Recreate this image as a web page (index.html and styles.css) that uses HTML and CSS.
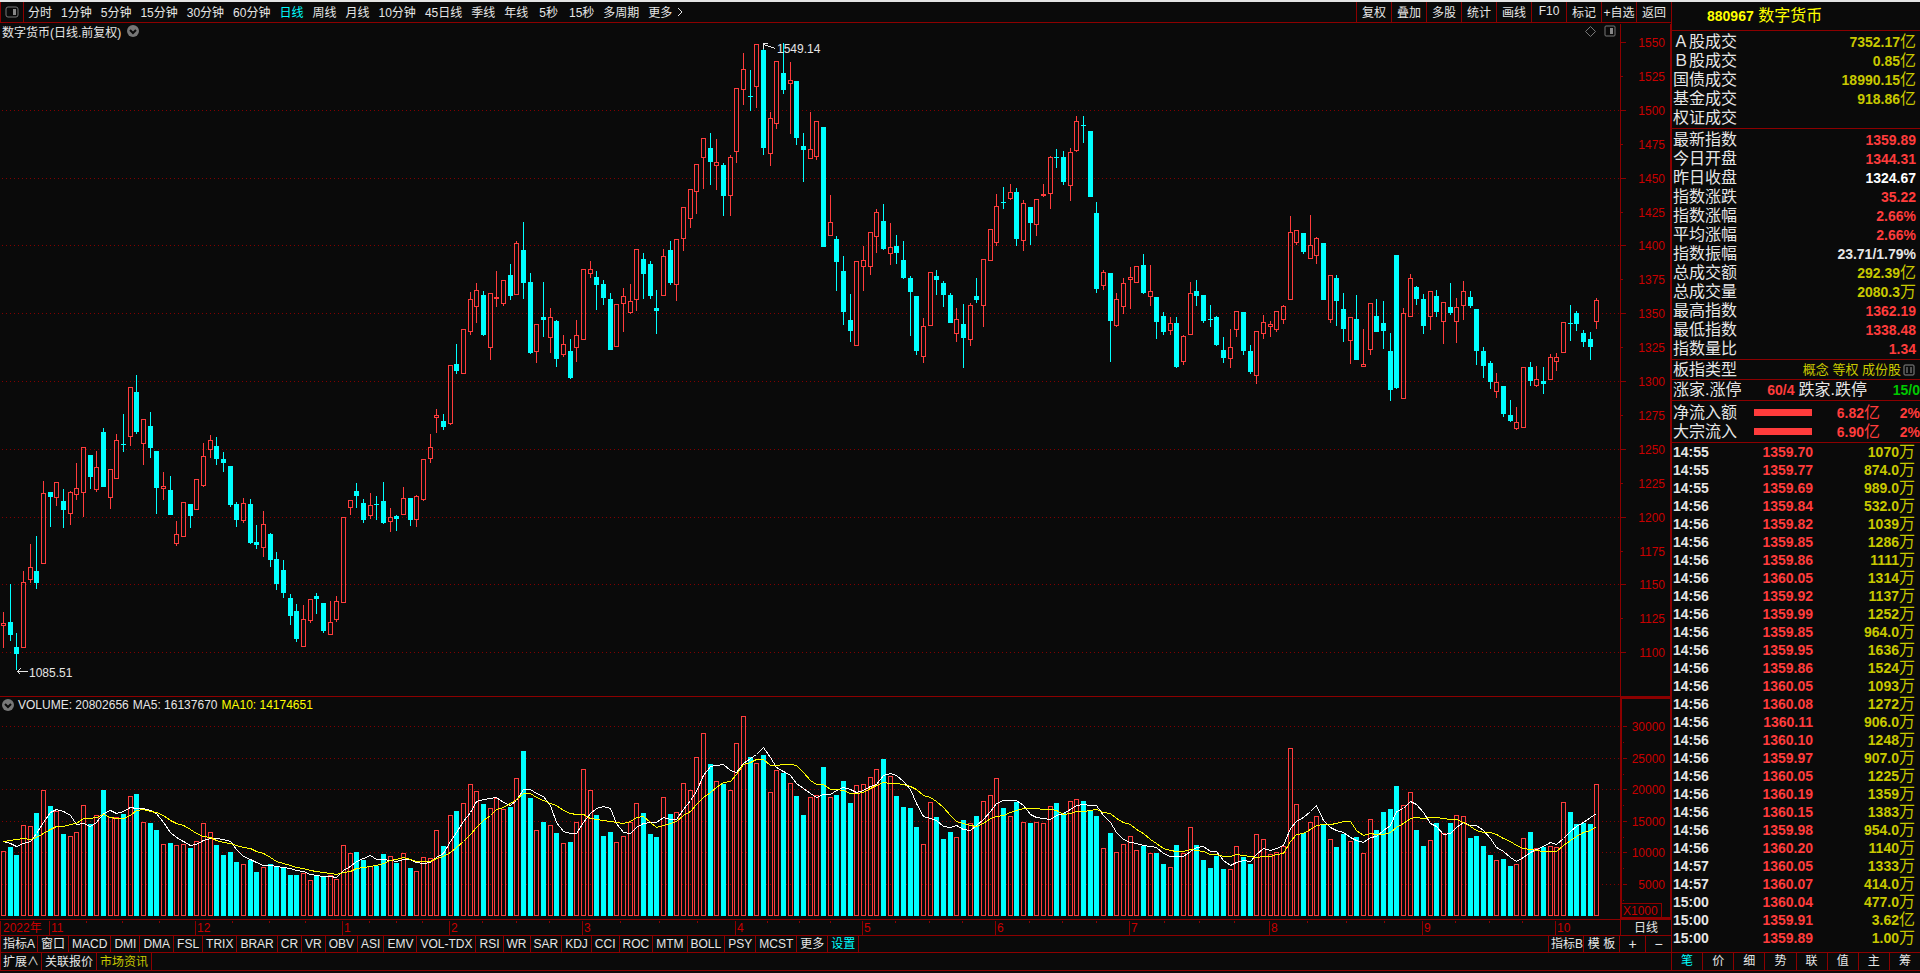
FILE: index.html
```
<!DOCTYPE html>
<html lang="zh-CN">
<head>
  <meta charset="utf-8">
  <title>880967 数字货币</title>
  <meta name="viewport" content="width=device-width, initial-scale=1.0">
  <link rel="stylesheet" href="styles.css">
</head>
<body>
  <div class="app">
    <main class="main">
      <nav class="topbar">
        <button class="panel-btn" aria-label="侧栏">
          <svg width="14" height="12" viewBox="0 0 14 12"><rect x="1" y="1" width="12" height="10" rx="2" fill="none" stroke="#777"/><rect x="8" y="3" width="3" height="6" fill="#888"/></svg>
        </button>
        <div class="periods">
          <button>分时</button><button>1分钟</button><button>5分钟</button><button>15分钟</button><button>30分钟</button><button>60分钟</button><button class="active">日线</button><button>周线</button><button>月线</button><button>10分钟</button><button>45日线</button><button>季线</button><button>年线</button><button class="sec">5秒</button><button class="sec">15秒</button><button>多周期</button><button>更多<svg class="more" width="6" height="10" viewBox="0 0 6 10"><path d="M1 1L5 5L1 9" fill="none" stroke="currentColor"/></svg></button>
        </div>
        <div class="tools">
          <button>复权</button><button>叠加</button><button>多股</button><button>统计</button><button>画线</button><button>F10</button><button>标记</button><button>+自选</button><button>返回</button>
        </div>
      </nav>

      <!-- K line -->
      <section class="price">
        <div class="plot">
          <svg id="priceChart" class="chart"></svg>
          <div class="plot-head">
            <span>数字货币(日线.前复权)</span>
            <svg width="12" height="12" viewBox="0 0 12 12"><circle cx="6" cy="6" r="6" fill="#777"/><path d="M3 5L6 8L9 5" fill="none" stroke="#0a0a0a" stroke-width="2"/></svg>
            <span class="plot-icons">
              <svg width="11" height="11" viewBox="0 0 11 11"><path d="M5.500 .5L10.500 5.500L5.500 10.500L.5 5.500Z" fill="none" stroke="#777"/></svg>
              <svg width="12" height="12" viewBox="0 0 12 12"><rect x="1" y="1" width="10" height="10" rx="1" fill="none" stroke="#777"/><rect x="6" y="3" width="3" height="6" fill="#888"/></svg>
            </span>
          </div>
        </div>
        <svg id="priceAxis" class="axis"></svg>
      </section>

      <!-- volume -->
      <section class="volume">
        <div class="plot">
          <svg id="volChart" class="chart"></svg>
          <div class="vol-head">
            <svg width="12" height="12" viewBox="0 0 12 12"><circle cx="6" cy="6" r="6" fill="#777"/><path d="M3 5L6 8L9 5" fill="none" stroke="#0a0a0a" stroke-width="2"/></svg>
            <span>VOLUME: 20802656</span>
            <span>MA5: 16137670</span>
            <span class="ma10">MA10: 14174651</span>
          </div>
        </div>
        <div class="vol-axis">
          <svg id="volAxis" class="axis-fill"></svg>
          <span class="unit">X1000</span>
        </div>
      </section>

      <div class="dates">
        <svg id="dateAxis" class="date-axis"></svg>
        <button class="cycle">日线</button>
      </div>

      <div class="indicators">
        <button>指标A</button><button>窗口</button><button>MACD</button><button>DMI</button><button>DMA</button><button>FSL</button><button>TRIX</button><button>BRAR</button><button>CR</button><button>VR</button><button>OBV</button><button>ASI</button><button>EMV</button><button>VOL-TDX</button><button>RSI</button><button>WR</button><button>SAR</button><button>KDJ</button><button>CCI</button><button>ROC</button><button>MTM</button><button>BOLL</button><button>PSY</button><button>MCST</button><button>更多</button><button class="active">设置</button>
        <div class="templates"><button>指标B</button><button>模 板</button></div>
        <div class="zoom"><button>+</button><button>−</button></div>
      </div>

      <div class="links">
        <button>扩展∧</button><button>关联报价</button><button class="info">市场资讯</button>
      </div>
    </main>

    <aside class="side">
      <h1 class="name"><b>880967</b> 数字货币</h1>

      <table class="quote">
        <tr><th>Ａ股成交</th><td class="y"><b>7352.17</b>亿</td></tr>
        <tr><th>Ｂ股成交</th><td class="y"><b>0.85</b>亿</td></tr>
        <tr><th>国债成交</th><td class="y"><b>18990.15</b>亿</td></tr>
        <tr><th>基金成交</th><td class="y"><b>918.86</b>亿</td></tr>
        <tr><th>权证成交</th><td></td></tr>
      </table>

      <table class="quote">
        <tr><th>最新指数</th><td class="r"><b>1359.89</b></td></tr>
        <tr><th>今日开盘</th><td class="r"><b>1344.31</b></td></tr>
        <tr><th>昨日收盘</th><td class="w"><b>1324.67</b></td></tr>
        <tr><th>指数涨跌</th><td class="r"><b>35.22</b></td></tr>
        <tr><th>指数涨幅</th><td class="r"><b>2.66%</b></td></tr>
        <tr><th>平均涨幅</th><td class="r"><b>2.66%</b></td></tr>
        <tr><th>指数振幅</th><td><b>23.71/1.79%</b></td></tr>
        <tr><th>总成交额</th><td class="y"><b>292.39</b>亿</td></tr>
        <tr><th>总成交量</th><td class="y"><b>2080.3</b>万</td></tr>
        <tr><th>最高指数</th><td class="r"><b>1362.19</b></td></tr>
        <tr><th>最低指数</th><td class="r"><b>1338.48</b></td></tr>
        <tr><th>指数量比</th><td class="r"><b>1.34</b></td></tr>
      </table>

      <div class="line type">
        <span>板指类型</span>
        <span class="tags">概念 等权 成份股
          <svg width="12" height="12" viewBox="0 0 12 12"><rect x="1" y="1" width="10" height="10" rx="1" fill="none" stroke="#888"/><path d="M3 4H5M7 4H9M3 6H5M7 6H9M3 8H5M7 8H9" stroke="#999"/></svg>
        </span>
      </div>

      <div class="line updown">
        <span>涨家.涨停</span><b class="r">60/4</b><span>跌家.跌停</span><b class="g">15/0</b>
      </div>

      <table class="flow">
        <tr><th>净流入额</th><td><i class="bar"></i></td><td class="r"><b>6.82</b>亿</td><td class="r"><b>2%</b></td></tr>
        <tr><th>大宗流入</th><td><i class="bar"></i></td><td class="r"><b>6.90</b>亿</td><td class="r"><b>2%</b></td></tr>
      </table>

      <table class="ticks"><tbody id="ticks"></tbody></table>

      <nav class="tabs">
        <button class="active">笔</button><button>价</button><button>细</button><button>势</button><button>联</button><button>值</button><button>主</button><button>筹</button>
      </nav>
    </aside>
  </div>
  <script src="chart.js"></script>
</body>
</html>
```
FILE: styles.css
```
* {
  box-sizing: border-box;
}
body {
  margin: 0;
  background: #0a0a0a;
  color: #e6e6e6;
  font-family: "Liberation Sans", "Noto Sans CJK SC", sans-serif;
  font-size: 12px;
}
button {
  margin: 0;
  padding: 0;
  border: 0;
  background: none;
  color: inherit;
  font: inherit;
  white-space: nowrap;
  cursor: pointer;
}
table {
  border-collapse: separate;
  border-spacing: 0;
}
.app {
  display: flex;
  height: 100vh;
  border-top: 2px solid #e4e4e4;
  padding-bottom: 2px;
  overflow: hidden;
}
.main {
  flex: 1;
  min-width: 0;
  display: flex;
  flex-direction: column;
}
.active {
  color: #00ffff;
}

/* top menu */
.topbar {
  display: flex;
  height: 21px;
  border-bottom: 1px solid #8c0000;
  border-left: 1px solid #8c0000;
}
.panel-btn {
  display: flex;
  align-items: center;
  justify-content: center;
  width: 23px;
  border-right: 1px solid #8c0000;
}
.periods {
  display: flex;
  gap: 9px;
  padding-left: 4px;
}
.periods button,
.tools button {
  padding-bottom: 2px;
}
.periods .sec {
  padding-left: 2px;
}
.more {
  margin-left: 5px;
}
.tools {
  display: flex;
  margin-left: auto;
}
.tools button {
  width: 35px;
  border-left: 1px solid #8c0000;
}

/* charts */
.price,
.volume {
  display: flex;
  border-bottom: 1px solid #8c0000;
}
.price {
  flex: 1;
  min-height: 0;
}
.volume {
  height: 223px;
}
.plot {
  position: relative;
  flex: 1;
  min-width: 0;
}
.chart {
  display: block;
  width: 100%;
  height: 100%;
}
.plot-head,
.vol-head {
  position: absolute;
  top: 0;
  left: 2px;
  right: 4px;
  display: flex;
  align-items: center;
  height: 16px;
}
.plot-head {
  gap: 6px;
}
.plot-icons {
  display: flex;
  align-items: center;
  gap: 8px;
  margin-left: auto;
}
.vol-head {
  gap: 4px;
}
.vol-head .ma10 {
  color: #ffff00;
}
.axis {
  width: 51px;
  height: 100%;
}
.vol-axis {
  position: relative;
  width: 51px;
  border: 2px solid #8c0000;
  border-right: 1px solid #8c0000;
}
.axis-fill {
  display: block;
  width: 100%;
  height: 100%;
}
.unit {
  position: absolute;
  left: 0;
  bottom: 0;
  height: 14px;
  padding: 0 3px 0 1px;
  border: 1px solid #8c0000;
  border-width: 1px 1px 0 0;
  color: #c80000;
  line-height: 14px;
}
.grid {
  stroke: #820000;
  stroke-dasharray: 1 3;
}
.rule {
  stroke: #8c0000;
}
.label {
  fill: #c80000;
}
.mark {
  fill: #e6e6e6;
}
.arrow {
  stroke: #e6e6e6;
  fill: none;
}
.up {
  fill: none;
  stroke: #ff3c3c;
}
.down {
  fill: #00ffff;
}
.ma5-line {
  fill: none;
  stroke: #ffffff;
}
.ma10-line {
  fill: none;
  stroke: #ffff00;
}

/* rows under the charts */
.dates,
.indicators,
.links {
  display: flex;
  border-bottom: 1px solid #8c0000;
}
.dates {
  height: 16px;
}
.indicators {
  height: 17px;
}
.links {
  height: 18px;
}
.date-axis {
  flex: 1;
  min-width: 0;
  height: 15px;
}
.cycle {
  width: 51px;
  border-left: 1px solid #8c0000;
  line-height: 14px;
}
.indicators button,
.links button {
  padding: 0 3px;
  border-right: 1px solid #8c0000;
  line-height: 16px;
}
.indicators button:first-child,
.links button:first-child {
  padding: 0 2px;
  border-left: 1px solid #8c0000;
}
.templates {
  display: flex;
  margin-left: auto;
}
.templates button {
  width: 36px;
}
.zoom {
  display: flex;
  width: 51px;
}
.indicators .zoom button {
  flex: 1;
  padding: 0;
  border-left: 0;
  font-size: 14px;
}
.zoom button:last-child {
  border-right: 0;
}
.links .info {
  color: #c8c800;
}

/* quote panel */
.side {
  display: flex;
  flex-direction: column;
  width: 249px;
  border-left: 1px solid #8c0000;
  font-size: 16px;
}
.side b {
  font-size: 14px;
}
.side th {
  padding: 0;
  font-weight: normal;
  text-align: left;
}
.side td {
  padding: 0;
  text-align: right;
}
.y {
  color: #c8c800;
}
.r {
  color: #ff3c3c;
}
.g {
  color: #00c800;
}
.w {
  color: #ffffff;
}
.name {
  margin: 0;
  height: 29px;
  border-bottom: 1px solid #8c0000;
  color: #ffff00;
  font-size: 16px;
  font-weight: normal;
  line-height: 28px;
  padding-left: 35px;
}
.quote,
.flow {
  width: 100%;
  padding: 1px 0;
  line-height: 17px;
  border-bottom: 1px solid #8c0000;
}
.quote tr,
.flow tr {
  height: 19px;
}
.side .quote td {
  padding-right: 4px;
}
.quote th,
.side .line,
.flow th,
.ticks td:first-child {
  padding-left: 1px;
}
.line {
  display: flex;
  align-items: center;
  justify-content: space-between;
  border-bottom: 1px solid #8c0000;
}
.type {
  height: 20px;
  line-height: 19px;
}
.tags {
  display: flex;
  align-items: center;
  gap: 2px;
  padding-right: 5px;
  color: #c8c800;
  font-size: 13px;
}
.updown {
  height: 21px;
  line-height: 20px;
}
.updown .r {
  margin-left: auto;
  margin-right: 4px;
}
.updown .g {
  margin-left: auto;
}
.flow {
  padding-top: 2px;
  table-layout: fixed;
}
.flow th {
  width: 82px;
}
.flow td:nth-child(2) {
  width: 58px;
}
.flow td:nth-child(3) {
  width: 68px;
}
.bar {
  display: block;
  height: 7px;
  background: #ff3c3c;
}
.ticks {
  width: 100%;
  line-height: 17px;
}
.ticks tr {
  height: 18px;
}
.side .ticks td:first-child {
  width: 44px;
  text-align: left;
}
.side .ticks td:nth-child(2) {
  width: 97px;
}
.side .ticks td:last-child {
  padding-right: 5px;
}
.tabs {
  display: flex;
  height: 19px;
  margin-top: auto;
  border-top: 1px solid #8c0000;
  border-bottom: 1px solid #8c0000;
  font-size: 12px;
}
.tabs button {
  flex: 1;
  border-right: 1px solid #8c0000;
  line-height: 17px;
}
.tabs button:last-child {
  border-right: 0;
}
```
FILE: chart.js
```
// one candle: direction, high, body top, body bottom, low, volume height
const bars = `
R 611 623 626 648 70|C 584 622 635 641 74|C 633 647 654 670 65|R 570 582 648 648 97|R 543 567 580 583 96|C 536 571 583 589 110
R 480 493 564 564 135|C 492 492 497 527 118|R 481 482 498 506 113|C 489 501 510 528 88|R 490 492 514 525 86|R 462 488 495 500 90
R 447 447 493 517 119|C 455 455 477 489 99|R 450 467 490 492 108|C 428 432 487 487 135|R 469 469 498 509 106|R 433 440 479 479 106
C 414 444 445 452 109|R 387 387 437 446 129|C 375 392 432 434 131|R 419 419 444 465 101|C 412 426 448 458 100|C 451 451 488 514 92
R 471 486 489 500 77|C 476 490 515 515 78|R 520 534 544 546 76|R 502 502 537 537 77|C 504 504 516 528 73|R 479 479 510 510 80
R 442 456 486 487 100|R 434 440 450 458 90|C 437 446 459 465 76|C 452 459 463 472 65|C 466 466 505 507 69|C 502 504 520 527 58
R 497 503 521 523 56|C 499 504 543 544 60|C 525 542 545 549 47|R 510 524 548 557 53|C 533 534 560 567 56|C 552 559 584 590 53
C 560 570 593 598 52|C 594 598 616 625 44|C 604 611 639 642 44|R 604 619 647 647 46|R 598 599 621 623 39|C 593 596 599 614 44
C 603 603 631 633 42|R 600 622 635 635 44|R 595 601 620 622 40|R 516 517 603 603 76|R 500 500 508 515 68|C 483 491 496 508 69
C 499 503 520 523 60|R 492 505 516 519 54|C 496 504 505 520 54|C 482 501 523 524 66|R 507 517 522 532 64|C 515 516 519 531 57
R 486 498 515 515 67|C 498 498 520 526 51|R 494 496 520 527 48|R 459 459 500 501 63|R 433 447 459 463 62|R 408 415 418 433 92
C 414 421 427 430 75|R 365 365 424 425 108|C 344 364 371 374 113|R 329 329 374 374 121|R 291 299 332 335 141|R 282 290 307 323 134
C 291 295 335 336 120|R 293 293 348 360 116|R 270 297 299 307 126|R 279 280 304 306 115|C 264 275 296 300 117|R 240 243 295 295 148
C 222 250 283 299 177|C 273 282 353 354 126|R 324 324 352 363 92|C 282 317 320 337 101|R 307 317 338 353 97|C 320 321 359 367 89
R 334 344 355 357 78|C 339 351 378 379 79|R 319 335 348 362 101|R 269 269 340 340 157|R 260 269 274 278 135|C 271 277 285 310 108
C 280 284 298 305 86|C 293 299 350 350 90|R 304 304 347 347 79|R 287 296 304 332 86|R 283 301 313 314 101|R 249 249 300 311 121
C 253 259 274 299 110|C 261 264 296 299 88|C 290 308 311 334 85|R 248 256 296 296 127|C 241 250 283 285 109|R 239 239 285 301 111
R 207 207 239 251 142|R 189 189 219 228 135|R 163 164 192 214 170|R 137 138 158 189 196|C 133 148 162 185 163|R 138 162 166 190 145
C 163 165 196 216 141|R 154 157 196 216 135|R 88 88 152 163 185|R 52 69 90 105 214|C 70 96 97 111 170|R 44 44 87 108 164
C 43 50 148 155 173|R 111 118 154 166 133|R 61 61 124 129 156|C 43 73 90 94 153|R 61 80 84 134 142|C 81 81 138 145 129
C 133 146 150 182 108|R 111 149 159 159 127|R 121 121 157 160 130|C 127 127 247 247 160|R 194 222 236 236 127|C 236 239 262 291 130
C 256 271 312 325 145|C 294 320 331 342 121|R 261 261 346 346 140|R 245 260 267 291 141|R 232 232 267 275 149|R 208 212 237 253 157
C 204 221 249 250 168|R 222 247 254 265 150|C 235 246 253 264 129|C 241 260 278 279 117|C 276 278 292 336 116|C 296 296 351 355 95
R 317 326 357 363 77|R 271 272 326 326 122|C 270 276 280 295 106|C 281 283 295 307 83|C 293 295 323 323 90|R 307 319 334 342 85
C 304 324 338 368 103|R 302 305 340 346 100|C 278 296 300 303 107|R 259 259 306 327 123|R 228 229 261 261 130|R 193 206 243 246 148
C 187 202 203 209 116|R 183 192 199 200 107|C 188 192 239 246 122|R 199 203 241 251 101|C 207 207 223 245 100|R 199 199 225 236 101
R 183 194 196 197 100|R 155 157 194 209 118|C 149 157 158 168 121|C 151 157 182 185 110|R 147 152 186 201 123|R 115 121 151 152 125
C 116 125 126 143 123|C 131 131 197 197 114|C 202 213 289 293 107|R 269 272 286 290 73|C 273 273 321 362 89|R 292 299 326 327 69
R 277 283 307 314 77|R 266 277 280 309 86|R 266 266 283 283 71|C 254 265 293 294 75|R 264 291 297 306 67|C 297 297 322 339 68
C 312 316 332 335 56|R 316 323 331 335 53|C 317 323 367 368 76|R 334 336 362 365 67|R 281 293 335 335 95|C 280 291 296 306 76
C 295 295 321 323 60|C 305 319 320 327 51|C 316 317 345 346 64|C 337 350 358 363 50|R 328 347 359 368 50|R 310 311 330 337 75
C 312 312 351 355 63|C 345 351 372 374 56|R 330 331 376 384 88|R 314 322 334 339 83|R 320 324 327 337 66|R 310 311 330 332 69
R 304 306 320 324 75|R 215 232 300 300 180|R 229 230 243 245 120|C 233 233 252 254 89|R 214 245 259 259 101|R 236 238 256 264 107
C 243 243 300 300 98|R 274 275 320 323 82|C 275 278 301 326 74|C 293 309 329 342 88|R 317 317 341 364 80|C 295 319 360 360 85
R 328 364 367 367 67|R 303 303 350 355 104|C 299 316 332 332 92|C 301 323 331 349 111|C 333 351 390 401 115|C 255 255 388 389 139
R 307 313 399 399 119|R 273 278 317 317 133|C 286 287 299 305 92|C 294 299 326 334 75|R 291 291 317 330 81|C 290 296 312 317 100
R 301 302 322 344 89|C 283 307 313 315 100|R 297 307 322 343 108|R 280 291 306 320 107|C 291 297 306 308 84|C 309 309 351 365 86
C 347 351 366 378 75|C 361 363 382 389 65|R 372 382 392 398 60|C 386 386 414 417 61|C 400 415 421 422 54|R 406 422 429 430 56
R 367 367 428 428 84|C 362 367 381 386 90|R 365 379 386 387 73|C 367 381 384 394 74|R 353 357 380 380 75|R 352 357 362 371 74
R 321 322 353 353 122|C 305 323 324 341 111|C 311 313 324 331 99|C 330 333 342 347 100|C 332 339 347 360 99|R 297 300 322 329 141
`.trim().split(/[|\n]/).map(s => {
  const [dir, ...n] = s.trim().split(' ');
  const [high, top, bottom, low, vol] = n.map(Number);
  return { dir, high, top, bottom, low, vol };
});

// volumes of the nine days before the first bar, needed for the averages
const before = [64, 55, 87, 106, 90, 84, 80, 82, 84];

const PRICE_TOP = 23;
const VOL_BASE = 219;
const VOL_SCALE = 14 / 15;
const barX = i => 3 + Math.round(i * 20 / 3);
const line = (x1, y1, x2, y2, cls) => `<line class="${cls}" x1="${x1}" y1="${y1}" x2="${x2}" y2="${y2}"/>`;
const text = (x, y, s, cls, anchor) => `<text class="${cls}" x="${x}" y="${y}" text-anchor="${anchor || 'start'}">${s}</text>`;
// half pixel shift keeps one pixel strokes sharp
const sharp = s => `<g transform="translate(.5 .5)" shape-rendering="crispEdges">${s}</g>`;

function drawPrice() {
  let grid = '', candles = '', ticks = '', labels = '';
  for (let p = 1550; p >= 1100; p -= 25) {
    const y = Math.round(42 + (1550 - p) * 1.356) - PRICE_TOP;
    const major = p % 50 === 0;
    if (major && p < 1550) grid += line(1, y, '100%', y, 'grid');
    ticks += line(0, y, major ? 5 : 2, y, 'rule');
    labels += text(45, y + 5, p, 'label', 'end');
  }
  bars.forEach((b, i) => {
    const x = barX(i);
    const high = b.high - PRICE_TOP, top = b.top - PRICE_TOP;
    const bottom = b.bottom - PRICE_TOP, low = b.low - PRICE_TOP;
    if (b.dir === 'R') {
      candles += `<path class="up" d="M${x} ${high}V${top}M${x} ${bottom - 1}V${low - 1}M${x - 2} ${top}H${x + 2}V${bottom - 1}H${x - 2}Z"/>`;
    } else {
      candles += `<g class="down" transform="translate(-.5 -.5)"><rect x="${x}" y="${high}" width="1" height="${low - high}"/><rect x="${x - 2}" y="${top}" width="5" height="${bottom - top}"/></g>`;
    }
  });
  const arrows = '<path class="arrow" d="M763 21L775 25M763 25V20H767M17 648H27M20 645L17 648L20 651"/>';
  document.getElementById('priceChart').innerHTML = sharp(grid + candles + arrows)
    + text(777, 30, '1549.14', 'mark') + text(29, 654, '1085.51', 'mark');
  document.getElementById('priceAxis').innerHTML = sharp(line(0, 0, 0, '100%', 'rule') + line(50, 0, 50, '100%', 'rule') + ticks) + labels;
}

function average(n) {
  const all = before.concat(bars.map(b => b.vol));
  return bars.map((b, i) => {
    const part = all.slice(i + 10 - n, i + 10);
    const y = VOL_BASE - Math.round(part.reduce((a, c) => a + c, 0) / n * VOL_SCALE);
    return barX(i) + ',' + y;
  }).join(' ');
}

function drawVolume() {
  let grid = '', columns = '', ticks = '', labels = '';
  [30, 25, 20, 15, 10, 5].forEach((v, i) => {
    const y = Math.round(29 + i * 31.6);
    grid += line(1, y, '100%', y, 'grid');
    ticks += line(0, y - 2, 4, y - 2, 'rule') + line(0, y + 14, 1, y + 14, 'rule');
    labels += text(43, y + 3, v * 1000, 'label', 'end');
  });
  bars.forEach((b, i) => {
    const x = barX(i);
    const h = Math.round(b.vol * VOL_SCALE);
    const y = VOL_BASE - h;
    if (b.dir === 'R') {
      columns += `<rect class="up" x="${x - 2}" y="${y}" width="4" height="${h - 1}"/>`;
    } else {
      columns += `<rect class="down" transform="translate(-.5 -.5)" x="${x - 2}" y="${y}" width="5" height="${h}"/>`;
    }
  });
  document.getElementById('volChart').innerHTML = sharp(grid + columns
    + `<polyline class="ma5-line" points="${average(5)}"/><polyline class="ma10-line" points="${average(10)}"/>`);
  document.getElementById('volAxis').innerHTML = sharp(ticks) + labels;
}

function drawDates() {
  const months = [[49, 11], [195, 12], [342, 1], [449, 2], [582, 3], [735, 4], [862, 5], [995, 6], [1129, 7], [1269, 8], [1422, 9], [1555, 10]];
  let rules = '', labels = text(3, 12, '2022年', 'label');
  months.forEach(([x, name], i) => {
    rules += line(x, 0, x, 15, 'rule');
    labels += text(x + 2, 12, name, 'label');
    if (!months[i + 1]) return;
    const step = (months[i + 1][0] - x) / 4;
    for (let q = 1; q < 4; q++) {
      const tx = Math.round(x + q * step);
      rules += line(tx, 0, tx, 2, 'rule');
    }
  });
  document.getElementById('dateAxis').innerHTML = sharp(line(0, 0, 0, 15, 'rule') + rules) + labels;
}

const trades = [
  ['14:55', '1359.70', '1070', '万'], ['14:55', '1359.77', '874.0', '万'], ['14:55', '1359.69', '989.0', '万'],
  ['14:56', '1359.84', '532.0', '万'], ['14:56', '1359.82', '1039', '万'], ['14:56', '1359.85', '1286', '万'],
  ['14:56', '1359.86', '1111', '万'], ['14:56', '1360.05', '1314', '万'], ['14:56', '1359.92', '1137', '万'],
  ['14:56', '1359.99', '1252', '万'], ['14:56', '1359.85', '964.0', '万'], ['14:56', '1359.95', '1636', '万'],
  ['14:56', '1359.86', '1524', '万'], ['14:56', '1360.05', '1093', '万'], ['14:56', '1360.08', '1272', '万'],
  ['14:56', '1360.11', '906.0', '万'], ['14:56', '1360.10', '1248', '万'], ['14:56', '1359.97', '907.0', '万'],
  ['14:56', '1360.05', '1225', '万'], ['14:56', '1360.19', '1359', '万'], ['14:56', '1360.15', '1383', '万'],
  ['14:56', '1359.98', '954.0', '万'], ['14:56', '1360.20', '1140', '万'], ['14:57', '1360.05', '1333', '万'],
  ['14:57', '1360.07', '414.0', '万'], ['15:00', '1360.04', '477.0', '万'], ['15:00', '1359.91', '3.62', '亿'],
  ['15:00', '1359.89', '1.00', '万'],
];
document.getElementById('ticks').innerHTML = trades.map(([time, price, vol, unit]) =>
  `<tr><td><b>${time}</b></td><td class="r"><b>${price}</b></td><td class="y"><b>${vol}</b>${unit}</td></tr>`).join('');

drawPrice();
drawVolume();
drawDates();
```
